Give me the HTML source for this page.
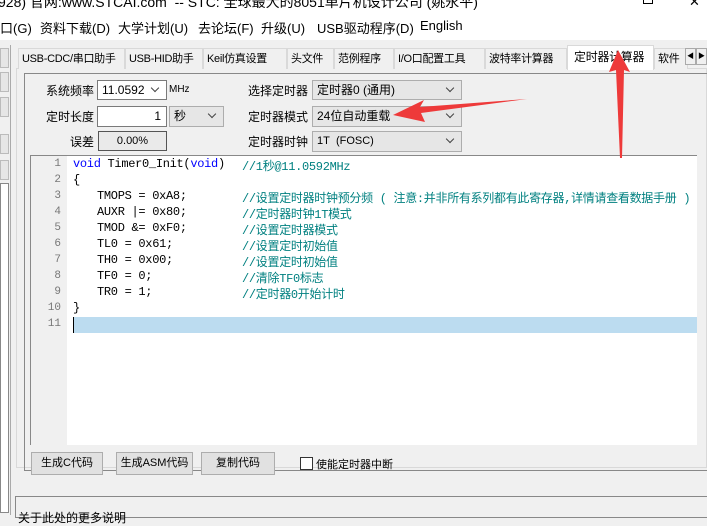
<!DOCTYPE html>
<html><head><meta charset="utf-8"><style>
*{margin:0;padding:0;box-sizing:border-box}
body{width:707px;height:516px;overflow:hidden;background:#f0f0f0;position:relative;font-family:"Liberation Sans","Noto Sans CJK SC",sans-serif;font-size:12px;color:#000}
.a{position:absolute;white-space:nowrap}
.combo{position:absolute;height:20px;background:#e6e6e6;border:1px solid #adadad;padding:1px 4px;line-height:16px;white-space:nowrap}
.combo.w{background:#fff;border-color:#7a7a7a}
.combo:after{content:"";position:absolute;right:8px;top:4px;width:5px;height:5px;border-right:1px solid #444;border-bottom:1px solid #444;transform:rotate(45deg)}
.tab{position:absolute;top:48px;height:21px;border:1px solid #d9d9d9;border-bottom:none;background:#f0f0f0;padding:2px 3px;font-size:11px;line-height:16px;white-space:nowrap;overflow:hidden;letter-spacing:-0.3px}
.btn{position:absolute;top:452px;height:23px;background:#e1e1e1;border:1px solid #adadad;text-align:center;line-height:20px;white-space:nowrap;font-size:11px}
.ln{position:absolute;left:30px;width:31px;text-align:right;color:#777;font-family:"Liberation Mono","Noto Sans CJK SC",monospace;font-size:11px}
.cd{position:absolute;font-family:"Liberation Mono","Noto Sans CJK SC",monospace;font-size:12px;white-space:pre;letter-spacing:-0.3px}
.cm{color:#008080}
.kw{color:#0000ff}
.lb{position:absolute;font-size:12px;white-space:nowrap}
</style></head><body>
<div class="a" style="left:0;top:0;width:707px;height:40px;background:#fff"></div>
<div class="a" style="left:-2px;top:-8px;font-size:14px;color:#000">928) 官网:www.STCAI.com&nbsp; -- STC: 全球最大的8051单片机设计公司 (姚永平)</div>
<div class="a" style="left:599px;top:-2px;width:10px;border-top:1px solid #000"></div>
<div class="a" style="left:643px;top:-6px;width:10px;height:10px;border:1px solid #000"></div>
<div class="a" style="left:689px;top:-6px;font-size:13px">✕</div>
<div class="a" style="left:0;top:18px;font-size:13px">口(G)</div>
<div class="a" style="left:40px;top:18px;font-size:13px">资料下载(D)</div>
<div class="a" style="left:118px;top:18px;font-size:13px">大学计划(U)</div>
<div class="a" style="left:198px;top:18px;font-size:13px">去论坛(F)</div>
<div class="a" style="left:261px;top:18px;font-size:13px">升级(U)</div>
<div class="a" style="left:317px;top:18px;font-size:13px">USB驱动程序(D)</div>
<div class="a" style="left:420px;top:18px;font-size:13px">English</div>
<div class="a" style="left:0;top:45px;width:11px;height:470px;border-right:1px solid #aaa"></div>
<div class="a" style="left:0;top:48px;width:9px;height:20px;border:1px solid #bbb;background:#e6e6e6"></div>
<div class="a" style="left:0;top:72px;width:9px;height:20px;border:1px solid #bbb;background:#e6e6e6"></div>
<div class="a" style="left:0;top:97px;width:9px;height:20px;border:1px solid #bbb;background:#e6e6e6"></div>
<div class="a" style="left:0;top:134px;width:9px;height:20px;border:1px solid #bbb;background:#e6e6e6"></div>
<div class="a" style="left:0;top:160px;width:9px;height:20px;border:1px solid #bbb;background:#e6e6e6"></div>
<div class="a" style="left:0;top:183px;width:9px;height:330px;border:1px solid #888;background:#fff"></div>
<div class="a" style="left:16px;top:68px;width:691px;height:400px;border:1px solid #d9d9d9;background:#f0f0f0"></div>
<div class="tab" style="left:18px;width:107px">USB-CDC/串口助手</div>
<div class="tab" style="left:125px;width:78px">USB-HID助手</div>
<div class="tab" style="left:203px;width:84px">Keil仿真设置</div>
<div class="tab" style="left:287px;width:47px">头文件</div>
<div class="tab" style="left:334px;width:60px">范例程序</div>
<div class="tab" style="left:394px;width:91px">I/O口配置工具</div>
<div class="tab" style="left:485px;width:82px">波特率计算器</div>
<div class="tab" style="left:567px;top:45px;width:87px;height:25px;background:#fff;font-size:12px;padding-top:3px;padding-left:6px">定时器计算器</div>
<div class="tab" style="left:654px;width:34px">软件</div>
<div class="a" style="left:685px;top:48px;width:11px;height:17px;border:1px solid #aaa;background:#f0f0f0;font-size:7px;text-align:center;line-height:15px">◀</div>
<div class="a" style="left:696px;top:48px;width:11px;height:17px;border:1px solid #aaa;background:#f0f0f0;font-size:7px;text-align:center;line-height:15px">▶</div>
<div class="a" style="left:24px;top:73px;width:683px;height:398px;border:1px solid #888;border-right:none"></div>
<div class="lb" style="left:46px;top:82px">系统频率</div>
<div class="combo w" style="left:97px;top:80px;width:70px">11.0592</div>
<div class="a" style="left:169px;top:84px;font-size:10px">MHz</div>
<div class="lb" style="left:46px;top:108px">定时长度</div>
<div class="a" style="left:97px;top:106px;width:70px;height:21px;background:#fff;border:1px solid #7a7a7a;text-align:right;padding-right:5px;line-height:19px">1</div>
<div class="combo" style="left:169px;top:106px;width:55px;height:21px">秒</div>
<div class="lb" style="left:70px;top:133px">误差</div>
<div class="a" style="left:98px;top:131px;width:69px;height:20px;background:#eaeaea;border:1px solid #555;text-align:center;line-height:18px;font-size:11px">0.00%</div>
<div class="lb" style="left:248px;top:82px">选择定时器</div>
<div class="combo" style="left:312px;top:80px;width:150px">定时器0 (通用)</div>
<div class="lb" style="left:248px;top:108px">定时器模式</div>
<div class="combo" style="left:312px;top:106px;width:150px;height:21px">24位自动重载</div>
<div class="lb" style="left:248px;top:133px">定时器时钟</div>
<div class="combo" style="left:312px;top:131px;width:150px;height:21px;font-size:11px">1T&nbsp; (FOSC)</div>
<div class="a" style="left:30px;top:155px;width:667px;height:290px;background:#fff;border-left:1px solid #888;border-top:1px solid #888"></div>
<div class="a" style="left:31px;top:156px;width:36px;height:289px;background:#f0f0f0"></div>
<div class="a" style="left:73px;top:317px;width:624px;height:16px;background:#bcdcf0;border-left:1px solid #000"></div>
<div class="ln" style="top:158px">1</div><div class="ln" style="top:174px">2</div><div class="ln" style="top:190px">3</div><div class="ln" style="top:206px">4</div><div class="ln" style="top:222px">5</div><div class="ln" style="top:238px">6</div><div class="ln" style="top:254px">7</div><div class="ln" style="top:270px">8</div><div class="ln" style="top:286px">9</div><div class="ln" style="top:302px">10</div><div class="ln" style="top:318px">11</div>
<div class="cd" style="left:73px;top:157px"><span class="kw">void</span> Timer0_Init(<span class="kw">void</span>)</div>
<div class="cd" style="left:73px;top:173px">{</div>
<div class="cd" style="left:97px;top:189px">TMOPS = 0xA8;</div>
<div class="cd" style="left:97px;top:205px">AUXR |= 0x80;</div>
<div class="cd" style="left:97px;top:221px">TMOD &amp;= 0xF0;</div>
<div class="cd" style="left:97px;top:237px">TL0 = 0x61;</div>
<div class="cd" style="left:97px;top:253px">TH0 = 0x00;</div>
<div class="cd" style="left:97px;top:269px">TF0 = 0;</div>
<div class="cd" style="left:97px;top:285px">TR0 = 1;</div>
<div class="cd" style="left:73px;top:301px">}</div>
<div class="cd cm" style="left:242px;top:157px">//1秒@11.0592MHz</div>
<div class="cd cm" style="left:242px;top:189px">//设置定时器时钟预分频 ( 注意:并非所有系列都有此寄存器,详情请查看数据手册 )</div>
<div class="cd cm" style="left:242px;top:205px">//定时器时钟1T模式</div>
<div class="cd cm" style="left:242px;top:221px">//设置定时器模式</div>
<div class="cd cm" style="left:242px;top:237px">//设置定时初始值</div>
<div class="cd cm" style="left:242px;top:253px">//设置定时初始值</div>
<div class="cd cm" style="left:242px;top:269px">//清除TF0标志</div>
<div class="cd cm" style="left:242px;top:285px">//定时器0开始计时</div>
<div class="btn" style="left:31px;width:72px">生成C代码</div>
<div class="btn" style="left:116px;width:77px">生成ASM代码</div>
<div class="btn" style="left:201px;width:74px">复制代码</div>
<div class="a" style="left:300px;top:457px;width:13px;height:13px;border:1px solid #333;background:#fff"></div>
<div class="a" style="left:316px;top:456px;font-size:11px">使能定时器中断</div>
<div class="a" style="left:15px;top:496px;width:692px;height:22px;border:1px solid #888;border-right:none;background:#f0f0f0"></div>
<div class="a" style="left:18px;top:509px;font-size:12px">关于此处的更多说明</div>
<svg class="a" style="left:0;top:0" width="707" height="516">
<polygon points="527,99 420,107 424,100 393,115 425,122 421,113" fill="#ee3a3a"/>
<polygon points="618,50 609,72 616,70 620,158 622,158 624,70 630,72" fill="#ee3a3a"/>
</svg>
</body></html>
